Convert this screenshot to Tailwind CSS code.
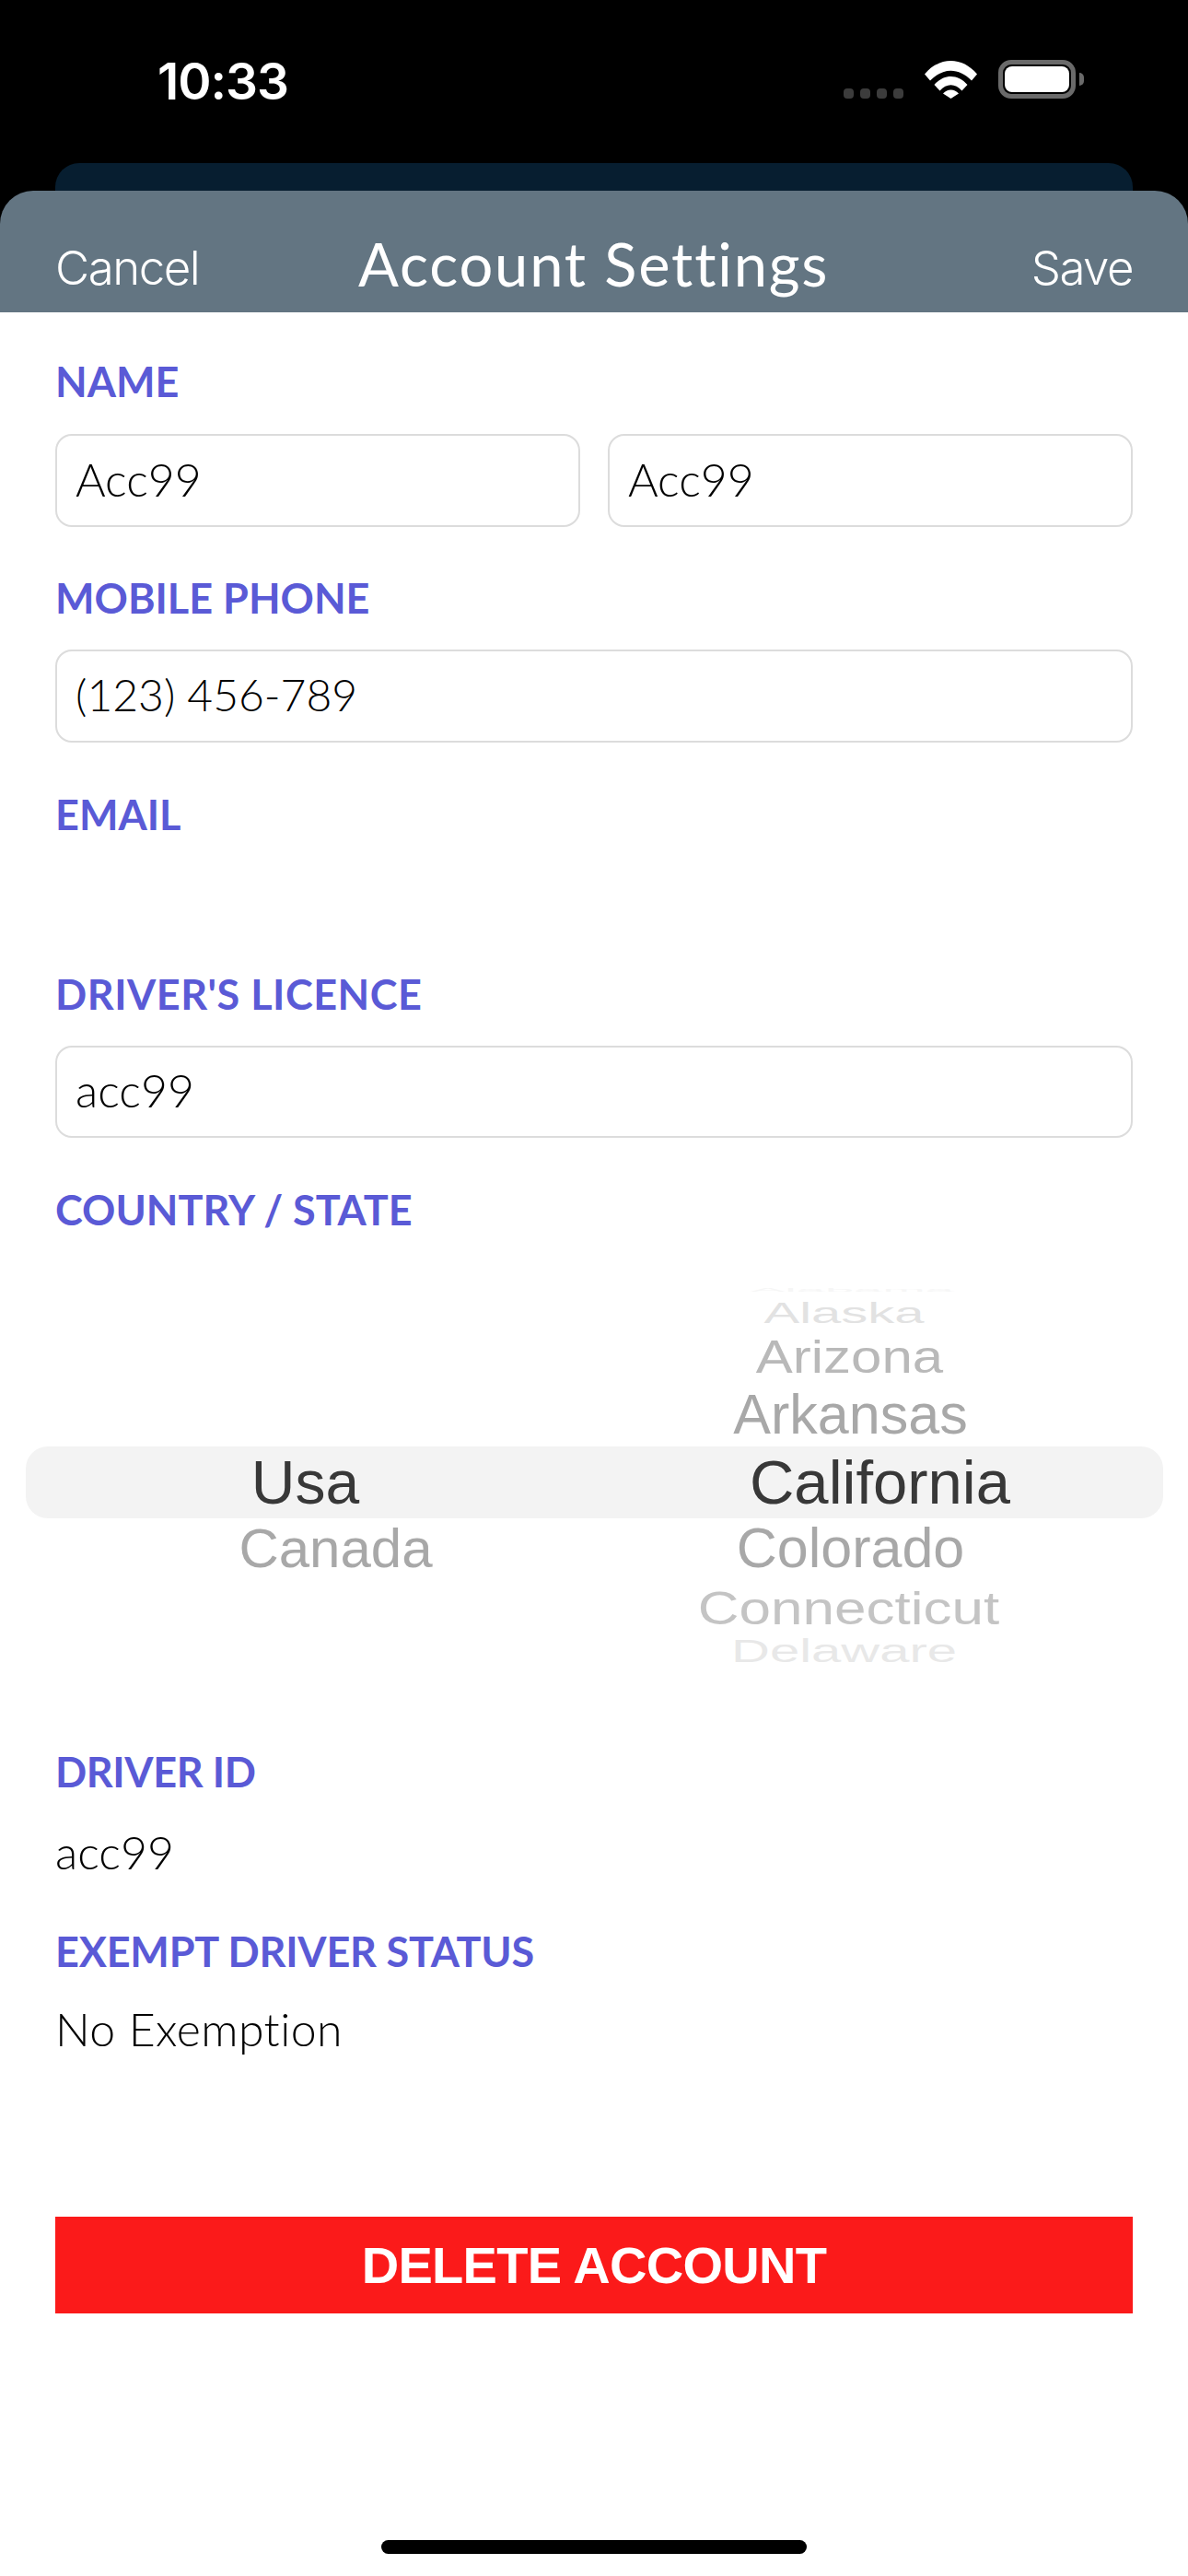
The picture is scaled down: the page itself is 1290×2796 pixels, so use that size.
<!DOCTYPE html>
<html lang="en">
<head>
  <meta charset="UTF-8">
  <title>Account Settings</title>
  <script src="https://cdn.jsdelivr.net/npm/@tailwindcss/browser@4"></script>
</head>
<body class="bg-white">
  <div class="w-[1290px] h-[2796px] overflow-hidden bg-white font-['Lato',sans-serif] text-black">

    <!-- status bar + card behind the sheet -->
    <div class="bg-black">
      <div class="h-[177px] flex items-start justify-between pl-[171px] pr-[113px]">
        <span class="mt-[57px] text-[55px] leading-[62px] font-semibold text-white font-['Inter',sans-serif] tracking-[-1px]">10:33</span>
        <div class="flex items-end mt-[65px] h-[42px]">
          <div class="flex gap-[7px] mr-[23px]">
            <span class="w-[11px] h-[11px] rounded-[4px] bg-[#3c3c3c]"></span>
            <span class="w-[11px] h-[11px] rounded-[4px] bg-[#3c3c3c]"></span>
            <span class="w-[11px] h-[11px] rounded-[4px] bg-[#3c3c3c]"></span>
            <span class="w-[11px] h-[11px] rounded-[4px] bg-[#3c3c3c]"></span>
          </div>
          <svg class="w-[57px] h-[41px] mr-[23px]" viewBox="0 0 57 41" fill="#fff">
            <path d="M0 14.5C16-4.8 41-4.8 57 14.5L51 21.5C37 7 20 7 6 21.5Z"/>
            <path d="M10.5 26C21 14 36 14 46.5 26L40.5 32.5C33 24 24 24 16.5 32.5Z"/>
            <path d="M20 35.5C25 30 32 30 37 35.5L28.5 41Z"/>
          </svg>
          <div class="w-[84px] h-[42px] rounded-[14px] border-[5px] border-[#6a6a6a] p-[2px]">
            <div class="w-full h-full rounded-[8px] bg-white"></div>
          </div>
          <span class="w-[5px] h-[14px] ml-[4px] mb-[14px] rounded-r-full bg-[#6a6a6a]"></span>
        </div>
      </div>
      <div class="mx-[60px] h-[30px] rounded-t-[26px] bg-[#071e30]"></div>
      <header class="relative h-[132px] rounded-t-[36px] bg-[#637582] text-white flex items-end justify-between px-[60px] pb-[18px]">
        <span class="text-[51px] leading-[60px] font-['Inter',sans-serif] font-light tracking-[-1.5px]">Cancel</span>
        <h1 class="absolute left-[389px] bottom-[15px] text-[65px] leading-[76px] tracking-[1.8px]">Account Settings</h1>
        <span class="text-[51px] leading-[60px] font-['Inter',sans-serif] font-light tracking-[-1.5px]">Save</span>
      </header>
    </div>

    <main class="px-[60px] pt-[52px]">
      <label class="block text-[45px] leading-[46px] font-bold text-[#5a5ad6]">NAME</label>
      <div class="mt-[34px] grid grid-cols-2 gap-[30px]">
        <div class="h-[101px] rounded-[18px] border-2 border-[#dcdcdc] pl-[20px] pb-[3px] flex items-center text-[50px] font-light">Acc99</div>
        <div class="h-[101px] rounded-[18px] border-2 border-[#dcdcdc] pl-[20px] pb-[3px] flex items-center text-[50px] font-light">Acc99</div>
      </div>

      <label class="block mt-[54px] text-[45px] leading-[46px] font-bold text-[#5a5ad6]">MOBILE PHONE</label>
      <div class="mt-[33px] h-[101px] rounded-[18px] border-2 border-[#dcdcdc] pl-[20px] pb-[3px] flex items-center text-[48px] font-light">(123) 456-789</div>

      <label class="block mt-[55px] text-[45px] leading-[46px] font-bold text-[#5a5ad6]">EMAIL</label>

      <label class="block mt-[149px] text-[45px] leading-[46px] font-bold tracking-[0.5px] text-[#5a5ad6]">DRIVER'S LICENCE</label>
      <div class="mt-[33px] h-[100px] rounded-[18px] border-2 border-[#dcdcdc] pl-[20px] pb-[3px] flex items-center text-[50px] font-light">acc99</div>

      <label class="block mt-[55px] text-[45px] leading-[46px] font-bold text-[#5a5ad6]">COUNTRY / STATE</label>
    </main>

    <!-- country / state wheel -->
    <section class="relative mt-[57px] h-[414px] px-[84px] grid grid-cols-2 font-['Liberation_Sans',sans-serif] whitespace-nowrap text-center">
      <div class="absolute left-[28px] right-[27px] top-[177px] h-[78px] rounded-[24px] bg-[#f3f3f3]"></div>
      <div class="relative">
        <div class="h-[177px]"></div>
        <div class="h-[78px] flex items-center justify-center text-[66px] text-[#383838] -translate-x-[33px]">Usa</div>
        <div class="h-[66px] flex items-center justify-center text-[60px] text-[#a8a8a8]">Canada</div>
      </div>
      <div class="relative">
        <div class="h-[14px] flex items-center justify-center text-[56px] text-[#f6f6f6] scale-y-[0.08]">Alabama</div>
        <div class="h-[36px] flex items-center justify-center text-[58px] text-[#e2e2e2] scale-y-[0.54] -translate-x-[9px]">Alaska</div>
        <div class="h-[59px] flex items-center justify-center text-[60px] text-[#b9b9b9] scale-y-[0.83] -translate-x-[3px]">Arizona</div>
        <div class="h-[68px] flex items-center justify-center text-[61px] text-[#a8a8a8] -translate-x-[2px]">Arkansas</div>
        <div class="h-[78px] flex items-center justify-center text-[67px] text-[#383838] translate-x-[30px]">California</div>
        <div class="h-[66px] flex items-center justify-center text-[61px] text-[#a8a8a8] -translate-x-[2px]">Colorado</div>
        <div class="h-[63px] flex items-center justify-center text-[62px] text-[#c4c4c4] scale-y-[0.8] -translate-x-[4px]">Connecticut</div>
        <div class="h-[30px] flex items-center justify-center text-[58px] text-[#e8e8e8] scale-y-[0.59] -translate-x-[9px]">Delaware</div>
      </div>
    </section>

    <div class="px-[60px] pt-[93px]">
      <label class="block text-[45px] leading-[46px] font-bold tracking-[-0.4px] text-[#5a5ad6]">DRIVER ID</label>
      <p class="mt-[34px] text-[50px] leading-[60px] font-light">acc99</p>
      <label class="block mt-[55px] text-[45px] leading-[46px] font-bold tracking-[-0.2px] text-[#5a5ad6]">EXEMPT DRIVER STATUS</label>
      <p class="mt-[31px] text-[50px] leading-[60px] font-light tracking-[0.4px]">No Exemption</p>
      <button class="mt-[174px] w-full h-[105px] bg-[#fb1a1a] text-white text-[56px] font-bold tracking-[-0.7px] font-['Liberation_Sans',sans-serif]">DELETE ACCOUNT</button>
    </div>

    <div class="mx-auto mt-[246px] w-[462px] h-[15px] rounded-full bg-black"></div>
  </div>
</body>
</html>
